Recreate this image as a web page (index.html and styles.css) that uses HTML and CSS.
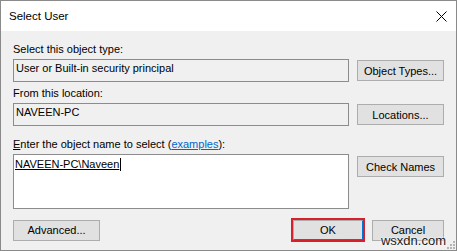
FILE: index.html
```html
<!DOCTYPE html>
<html lang="en">
<head>
  <meta charset="UTF-8" />
  <title>Select User</title>
  <link rel="stylesheet" href="styles.css">
</head>
<body>
  <div class="window">
    <div class="titlebar">
      <span class="title">Select User</span>
      <svg class="close" width="11" height="11" viewBox="0 0 11 11">
        <path d="M0.5 0.5 L10.5 10.5 M10.5 0.5 L0.5 10.5" stroke="#000" stroke-width="1" fill="none"/>
      </svg>
    </div>

    <div class="dialog">
      <div class="label">Select this object type:</div>
      <div class="row">
        <div class="field">User or Built-in security principal</div>
        <button class="btn">Object Types...</button>
      </div>

      <div class="label second">From this location:</div>
      <div class="row">
        <div class="field">NAVEEN-PC</div>
        <button class="btn">Locations...</button>
      </div>

      <div class="label third"><u>E</u>nter the object name to select (<a href="#">examples</a>):</div>
      <div class="row">
        <div class="field area"><span class="name">NAVEEN-PC\Naveen</span><span class="caret"></span></div>
        <button class="btn check">Check Names</button>
      </div>

      <div class="footer">
        <button class="btn">Advanced...</button>
        <div class="actions">
          <span class="highlight"><button class="btn ok">OK</button></span>
          <button class="btn cancel">Cancel</button>
        </div>
      </div>
    </div>

    <!-- watermark over the bottom corner -->
    <span class="watermark">wsxdn.com</span>
    <svg class="grip" width="8" height="8" viewBox="0 0 8 8">
      <rect x="6" y="0" width="2" height="2" fill="#b4b4b4"/>
      <rect x="3" y="3" width="2" height="2" fill="#b4b4b4"/>
      <rect x="6" y="3" width="2" height="2" fill="#b4b4b4"/>
      <rect x="0" y="6" width="2" height="2" fill="#b4b4b4"/>
      <rect x="3" y="6" width="2" height="2" fill="#b4b4b4"/>
      <rect x="6" y="6" width="2" height="2" fill="#b4b4b4"/>
    </svg>
  </div>
</body>
</html>
```

FILE: styles.css
```css
:root {
  --dialog-bg: #f0f0f0;
  --btn-bg: #e1e1e1;
  --btn-border: #adadad;
  --field-border: #8c8c8c;
  --link: #0066cc;
  --mark: #d7202c;
  --focus: #0078d7;
}

html, body {
  margin: 0;
  height: 100%;
  background: #fff;
}

* {
  box-sizing: border-box;
}

/* Window frame */

.window {
  position: relative;
  width: 457px;
  height: 251px;
  border: 1px solid #8a8a8a;
  background: var(--dialog-bg);
  display: flex;
  flex-direction: column;
  font-family: "Liberation Sans", Arial, sans-serif;
  font-size: 11px;
  color: #000;
}

.titlebar {
  height: 30px;
  background: #fff;
  display: flex;
  align-items: center;
  justify-content: space-between;
  padding: 0 9px 0 8px;
  flex-shrink: 0;
}

.title {
  font-size: 11.5px;
  color: #000;
}

/* Dialog content */

.dialog {
  flex: 1;
  display: flex;
  flex-direction: column;
  padding: 12px 12px 0 12px;
}

.label {
  height: 13px;
  line-height: 13px;
  margin-bottom: 3px;
  white-space: nowrap;
}

.label.second {
  margin-top: 5px;
}

.label.third {
  margin-top: 12px;
}

.label a {
  color: var(--link);
}

.row {
  display: flex;
  align-items: flex-start;
  gap: 8px;
}

.field {
  flex: 1;
  height: 23px;
  border: 1px solid var(--field-border);
  padding: 2px 2px 0 2px;
  line-height: 13px;
  white-space: nowrap;
}

.field.area {
  height: 55px;
  background: #fff;
  padding: 3px 1px 0 1px;
}

.name {
  text-decoration: underline;
}

.caret {
  display: inline-block;
  width: 1px;
  height: 13px;
  background: #000;
  vertical-align: -3px;
  margin-left: 1px;
}

.btn {
  width: 87px;
  height: 22px;
  margin: 0;
  padding: 0;
  background: var(--btn-bg);
  border: 1px solid var(--btn-border);
  font-family: inherit;
  font-size: 11px;
  color: #000;
  flex-shrink: 0;
}

.row .btn {
  margin-top: 1px;
  height: 21px;
}

.row .btn.check {
  margin-top: 2px;
}

/* Bottom buttons */

.footer {
  margin-top: 9px;
  display: flex;
  align-items: center;
  justify-content: space-between;
}

.footer .btn {
  height: 21px;
}

.actions {
  display: flex;
  align-items: center;
  gap: 7px;
}

.highlight {
  display: flex;
  border: 2px solid var(--mark);
}

.btn.ok {
  width: 70px;
  height: 20px;
  border: 1px solid var(--focus);
  border-left-color: var(--btn-border);
  border-top-color: var(--btn-border);
}

.btn.cancel {
  width: 72px;
}

.watermark {
  position: absolute;
  right: 10px;
  bottom: 2px;
  font-size: 13px;
  color: #1a1a1a;
  text-shadow: 0 0 2px #fff, 0 0 2px #fff;
}

.grip {
  position: absolute;
  right: 1px;
  bottom: 1px;
}
```
